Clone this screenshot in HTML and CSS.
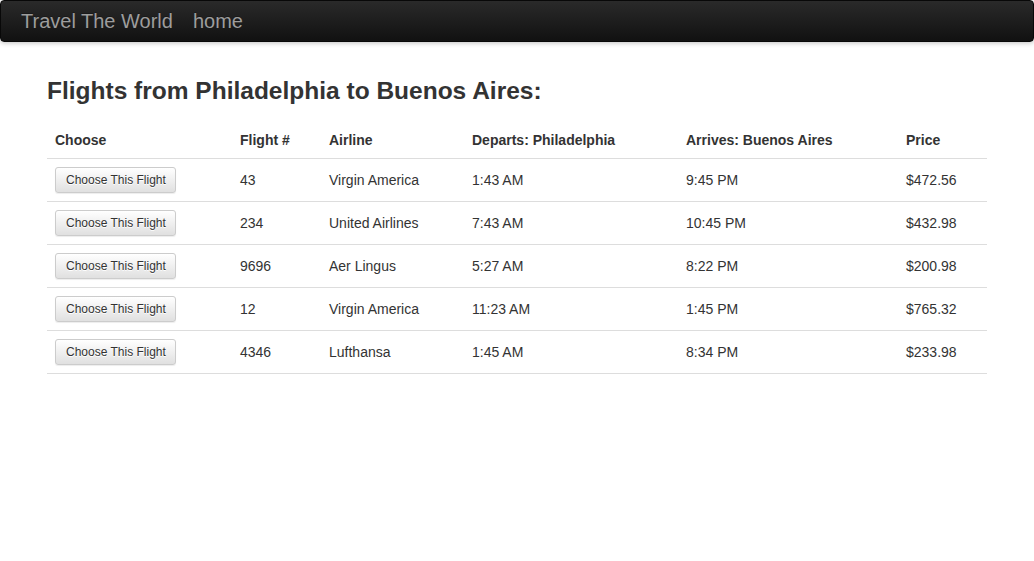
FILE: index.html
```html
<!DOCTYPE html>
<html>
<head>
<meta charset="utf-8">
<title>Travel The World</title>
<link rel="stylesheet" href="styles.css">
</head>
<body>
<nav class="navbar">
  <a class="brand" href="#">Travel The World</a>
  <a class="nav-link" href="#">home</a>
</nav>
<main class="container">
  <h3 class="title">Flights from Philadelphia to Buenos Aires:</h3>
  <table class="flights">
    <colgroup>
      <col class="c-choose"><col class="c-num"><col class="c-airline"><col class="c-dep"><col class="c-arr"><col class="c-price">
    </colgroup>
    <thead>
      <tr><th>Choose</th><th>Flight #</th><th>Airline</th><th>Departs: Philadelphia</th><th>Arrives: Buenos Aires</th><th>Price</th></tr>
    </thead>
    <tbody>
      <tr><td><button class="btn">Choose This Flight</button></td><td>43</td><td>Virgin America</td><td>1:43 AM</td><td>9:45 PM</td><td>$472.56</td></tr>
      <tr><td><button class="btn">Choose This Flight</button></td><td>234</td><td>United Airlines</td><td>7:43 AM</td><td>10:45 PM</td><td>$432.98</td></tr>
      <tr><td><button class="btn">Choose This Flight</button></td><td>9696</td><td>Aer Lingus</td><td>5:27 AM</td><td>8:22 PM</td><td>$200.98</td></tr>
      <tr><td><button class="btn">Choose This Flight</button></td><td>12</td><td>Virgin America</td><td>11:23 AM</td><td>1:45 PM</td><td>$765.32</td></tr>
      <tr><td><button class="btn">Choose This Flight</button></td><td>4346</td><td>Lufthansa</td><td>1:45 AM</td><td>8:34 PM</td><td>$233.98</td></tr>
    </tbody>
  </table>
</main>
</body>
</html>
```
FILE: styles.css
```css
* { box-sizing: border-box; }
html, body { margin: 0; padding: 0; }
body {
  font-family: "Liberation Sans", Arial, sans-serif;
  font-size: 14px;
  line-height: 20px;
  color: #333;
  background: #fff;
}
.navbar {
  display: flex;
  align-items: center;
  height: 42px;
  padding: 0 0 0 20px;
  background: linear-gradient(to bottom, #2a2a2a 0%, #111 100%);
  border: 1px solid #080808;
  border-radius: 4px;
  box-shadow: 0 1px 5px rgba(0,0,0,0.25);
}
.navbar a {
  color: #9d9d9d;
  text-decoration: none;
  font-size: 20px;
  line-height: 20px;
  text-shadow: 0 -1px 0 rgba(0,0,0,0.25);
}
.brand { margin-right: 20px; }
.container {
  width: 940px;
  margin: 0 auto;
}
.title {
  font-size: 24.5px;
  font-weight: bold;
  line-height: 26px;
  margin: 36px 0 18px;
  color: #333;
}
.flights {
  width: 940px;
  border-collapse: collapse;
  border-spacing: 0;
}
.c-choose { width: 185px; }
.c-num { width: 89px; }
.c-airline { width: 143px; }
.c-dep { width: 214px; }
.c-arr { width: 220px; }
.c-price { width: 89px; }
.flights th {
  text-align: left;
  font-weight: bold;
  padding: 8px;
  line-height: 20px;
  border-bottom: 1px solid #ddd;
  vertical-align: bottom;
}
.flights td {
  padding: 8px;
  line-height: 20px;
  border-bottom: 1px solid #ddd;
  vertical-align: middle;
}
.btn {
  display: inline-block;
  font-family: "Liberation Sans", Arial, sans-serif;
  font-size: 12px;
  line-height: 16px;
  padding: 4px 10px 4px 10px;
  width: 121px;
  text-align: center;
  color: #333;
  background: linear-gradient(to bottom, #fff 0%, #e0e0e0 100%);
  border: 1px solid #ccc;
  border-radius: 3px;
  box-shadow: inset 0 1px 0 rgba(255,255,255,0.15), 0 1px 1px rgba(0,0,0,0.075);
  text-shadow: 0 1px 0 #fff;
  white-space: nowrap;
  cursor: pointer;
}
```
